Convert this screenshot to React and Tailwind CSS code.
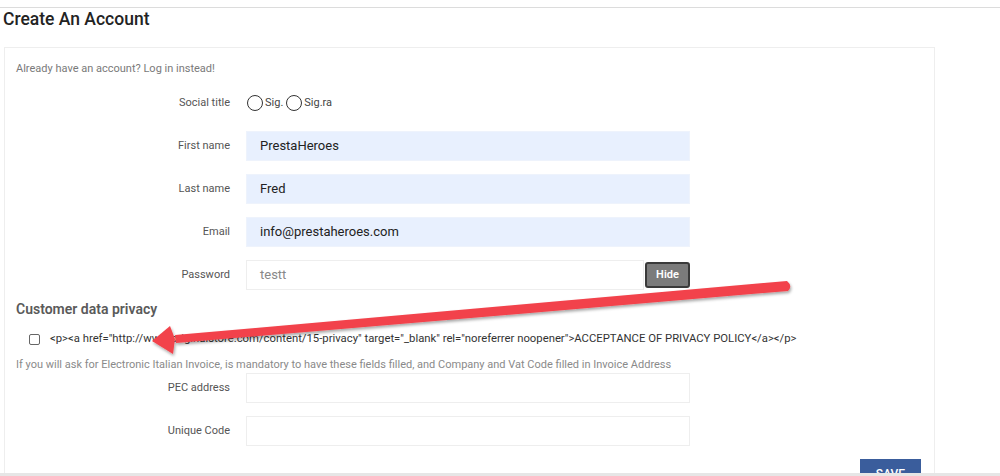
import React from 'react'

function Row({ label, children }) {
  return (
    <div className="flex items-center h-[30px] mb-[13px]">
      <label className="w-[225px] text-right text-[11px] text-[#555] shrink-0">{label}</label>
      <div className="ml-[16px] flex items-center">{children}</div>
    </div>
  )
}

function Radio({ label }) {
  return (
    <span className="inline-flex items-center mr-[3px]">
      <span className="w-[16px] h-[16px] rounded-full border-[1.5px] border-[#333] bg-white inline-block" />
      <span className="ml-[2px] text-[11px] text-[#444]">{label}</span>
    </span>
  )
}

function Arrow() {
  return (
    <svg className="absolute inset-0 pointer-events-none" width="1000" height="476" viewBox="0 0 1000 476">
      <defs>
        <filter id="sh" x="-10%" y="-50%" width="120%" height="200%">
          <feDropShadow dx="1" dy="2" stdDeviation="1.5" floodColor="#000" floodOpacity="0.35" />
        </filter>
      </defs>
      <g filter="url(#sh)" fill="#f2434b">
        <path d="M787 281 L175 335 L176 343 L788 291 Q793 286 787 281 Z" />
        <path d="M152 341 L170 326 L175 339 L173 354 Z" />
      </g>
    </svg>
  )
}

export default function App() {
  const font = { fontFamily: 'Roboto, "Liberation Sans", sans-serif' }
  return (
    <div className="relative w-[1000px] h-[476px] overflow-hidden bg-white" style={font}>
      <div className="mt-[7px] border-t border-[#dcdcdc]" />
      <h1 className="pl-[3px] pt-[1px] text-[17.5px] font-medium text-[#232323] leading-[20px]">Create An Account</h1>

      <div className="ml-[4px] mt-[18px] w-[931px] border border-[#eeeeee] pl-[11px] pt-[13px] pb-[40px]">
        <p className="text-[11px] text-[#7a7a7a] leading-[16px] mb-[11px]">Already have an account? Log in instead!</p>

        <div className="-ml-[11px]">
          <Row label="Social title">
            <span className="ml-[1px]" />
            <Radio label="Sig." />
            <Radio label="Sig.ra" />
          </Row>
          <Row label="First name">
            <div className="w-[444px] h-[30px] bg-[#e8f0fe] border border-[#eef3fc] px-[13px] flex items-center text-[13px] text-[#222]">PrestaHeroes</div>
          </Row>
          <Row label="Last name">
            <div className="w-[444px] h-[30px] bg-[#e8f0fe] border border-[#eef3fc] px-[13px] flex items-center text-[13px] text-[#222]">Fred</div>
          </Row>
          <Row label="Email">
            <div className="w-[444px] h-[30px] bg-[#e8f0fe] border border-[#eef3fc] px-[13px] flex items-center text-[13px] text-[#222]">info@prestaheroes.com</div>
          </Row>
          <Row label="Password">
            <div className="w-[398px] h-[30px] bg-white border border-[#eeeeee] px-[13px] flex items-center text-[13px] text-[#888]">testt</div>
            <button className="ml-[1px] w-[45px] h-[26px] bg-[#7b7b7b] border-2 border-[#3a3a3a] rounded-[3px] text-white text-[11px] font-semibold">Hide</button>
          </Row>
        </div>

        <h2 className="-mt-[3px] text-[14px] font-semibold text-[#5a5a5a] leading-[18px]">Customer data privacy</h2>
        <div className="flex items-center mt-[13px] ml-[13px]">
          <span className="w-[11px] h-[11px] border border-[#666] rounded-[2px] bg-white" />
          <span className="ml-[10px] text-[11.3px] text-[#333] whitespace-nowrap">
            {'<p><a href="http://www.originalstore.com/content/15-privacy" target="_blank" rel="noreferrer noopener">ACCEPTANCE OF PRIVACY POLICY</a></p>'}
          </span>
        </div>
        <p className="mt-[10px] text-[11px] text-[#8a8a8a] leading-[14px] whitespace-nowrap">
          If you will ask for Electronic Italian Invoice, is mandatory to have these fields filled, and Company and Vat Code filled in Invoice Address
        </p>

        <div className="-ml-[11px] mt-[1px]">
          <Row label="PEC address">
            <div className="w-[444px] h-[30px] bg-white border border-[#eeeeee]" />
          </Row>
          <Row label="Unique Code">
            <div className="w-[444px] h-[30px] bg-white border border-[#eeeeee]" />
          </Row>
        </div>

        <div className="flex justify-end pr-[13px]">
          <button className="w-[61px] h-[34px] bg-[#3a5d9c] text-white text-[12px] font-medium pt-[6px] flex justify-center items-start">SAVE</button>
        </div>
      </div>

      <div className="absolute left-0 right-0 bottom-0 h-[3px] bg-[#e6e6e6]" />
      <Arrow />
    </div>
  )
}
